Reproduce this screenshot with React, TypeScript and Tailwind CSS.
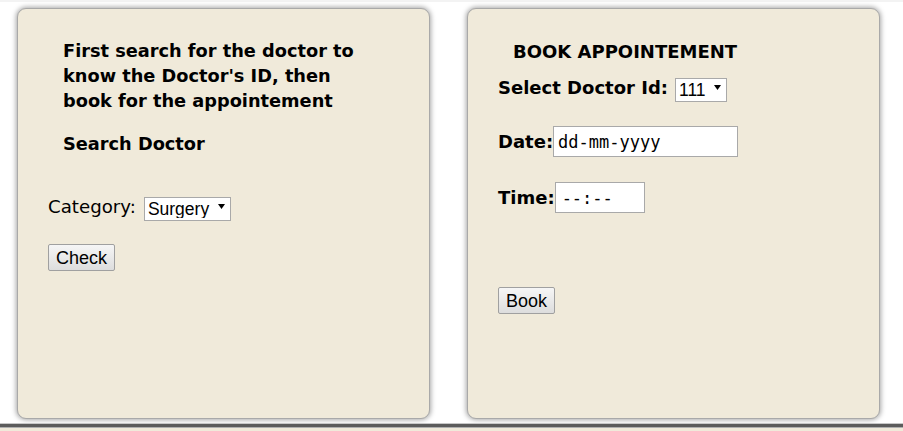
import React from "react";

const verdana = { fontFamily: '"DejaVu Sans", Verdana, sans-serif' };
const arial = { fontFamily: '"Liberation Sans", Arial, sans-serif' };

function Panel({ children }: { children: React.ReactNode }) {
  return (
    <div className="w-[413px] h-[411px] bg-[#f0eada] rounded-[9px] border border-[#a9a9a9] shadow-[0_0_5px_1px_rgba(0,0,0,0.35)]">
      {children}
    </div>
  );
}

function Select({ value, width }: { value: string; width: string }) {
  return (
    <div className={`relative h-[24px] ${width}`}>
      <select
        className="w-full h-full bg-white border border-[#a9a9a9] text-[17.5px] font-normal text-black pl-[3px] appearance-none leading-none"
        style={arial}
      >
        <option>{value}</option>
      </select>
      <svg
        className="absolute right-[6px] top-[9px] pointer-events-none"
        width="7"
        height="5"
        viewBox="0 0 7 5"
      >
        <path d="M0 0h7L3.5 5z" fill="#000" />
      </svg>
    </div>
  );
}

function Button({ label }: { label: string }) {
  return (
    <button
      className="h-[27px] px-[7px] text-[18px] leading-none text-black border border-[#a0a0a0] rounded-[2px] bg-gradient-to-b from-[#f6f6f6] to-[#dddddd]"
      style={arial}
    >
      {label}
    </button>
  );
}

export default function App() {
  return (
    <div className="w-[903px] h-[431px] bg-white overflow-hidden flex flex-col" style={verdana}>
      <div className="h-[2px] bg-[#f3f3f3]" />
      <div className="flex gap-[37px] pl-[17px] pt-[6px]">
        {/* Left: search */}
        <Panel>
          <div className="pl-[45px] w-[350px] pt-[30px] text-[17.75px] font-bold leading-[25px] text-black">
            First search for the doctor to know the Doctor's ID, then book for the appointement
          </div>
          <div className="pl-[45px] pt-[18px] text-[17.75px] font-bold leading-[25px] text-black">
            Search Doctor
          </div>
          <div className="pl-[30px] pt-[36px] flex items-center gap-[8px] text-[18.2px] text-black">
            <span>Category:</span>
            <Select value="Surgery" width="w-[87px]" />
          </div>
          <div className="pl-[30px] pt-[24px]">
            <Button label="Check" />
          </div>
        </Panel>

        {/* Right: booking */}
        <Panel>
          <div className="pl-[45px] pt-[30px] text-[18px] font-bold leading-[25px] text-black">
            BOOK APPOINTEMENT
          </div>
          <div className="pl-[30px] pt-[10px] flex items-center gap-[7px] text-[18px] font-bold text-black">
            <span>Select Doctor Id:</span>
            <Select value="111" width="w-[52px]" />
          </div>
          <div className="pl-[30px] pt-[25px] flex items-center text-[18px] font-bold text-black">
            <span>Date:</span>
            <input
              type="text"
              placeholder="dd-mm-yyyy"
              className="h-[31px] w-[185px] bg-white border border-[#a9a9a9] pl-[4px] text-[17px] font-normal placeholder:text-black outline-none"
              style={{ fontFamily: '"DejaVu Sans Mono", monospace' }}
            />
          </div>
          <div className="pl-[30px] pt-[25px] flex items-center text-[18px] font-bold text-black">
            <span>Time:</span>
            <input
              type="text"
              placeholder="--:--"
              className="h-[31px] w-[90px] bg-white border border-[#a9a9a9] pl-[6px] text-[17px] font-normal placeholder:text-black outline-none"
              style={{ fontFamily: '"DejaVu Sans Mono", monospace' }}
            />
          </div>
          <div className="pl-[30px] pt-[74px]">
            <Button label="Book" />
          </div>
        </Panel>
      </div>

      {/* footer edge */}
      <div className="mt-[4px] h-px bg-[#c8c8c8]" />
      <div className="h-[3px] bg-[#5c5c5c]" />
      <div className="h-px bg-[#b0b0b0]" />
      <div className="flex-1 bg-[#f0eada]" />
    </div>
  );
}
